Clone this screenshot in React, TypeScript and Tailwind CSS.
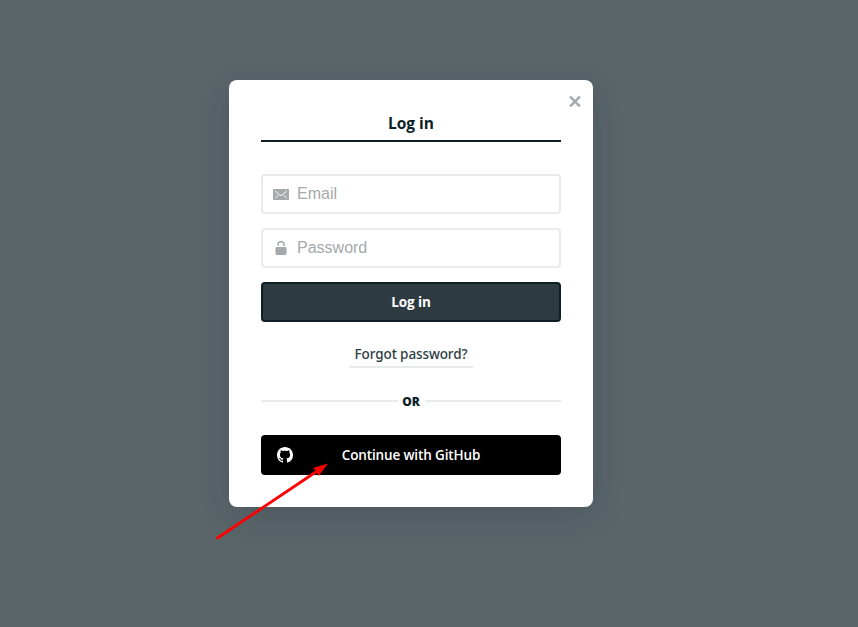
import React from "react";

function MailIcon() {
  return (
    <svg width="16" height="11" viewBox="0 0 16 11" className="block">
      <rect width="16" height="11" rx="0.8" fill="#a3a9ac" />
      <path d="M2.3 2 L6.3 5.7 Q8 7.3 9.7 5.7 L13.7 2 M2.3 9 L5 6.4 M13.7 9 L11 6.4" fill="none" stroke="#fff" strokeWidth="1" />
    </svg>
  );
}

function LockIcon() {
  return (
    <svg width="12" height="14" viewBox="0 0 12 14" className="block">
      <path d="M3 4.8 V3.6 a3 2.8 0 0 1 6 0 V5" fill="none" stroke="#a3a9ac" strokeWidth="1.6" />
      <rect x="0.5" y="6" width="11" height="8" rx="1.4" fill="#a3a9ac" />
    </svg>
  );
}

function GitHubIcon() {
  return (
    <svg width="16" height="16" viewBox="0 0 16 16" fill="#fff" className="block">
      <path d="M8 0C3.58 0 0 3.58 0 8c0 3.54 2.29 6.53 5.47 7.59.4.07.55-.17.55-.38 0-.19-.01-.82-.01-1.49-2.01.37-2.53-.49-2.69-.94-.09-.23-.48-.94-.82-1.13-.28-.15-.68-.52-.01-.53.63-.01 1.08.58 1.23.82.72 1.21 1.87.87 2.33.66.07-.52.28-.87.51-1.07-1.78-.2-3.64-.89-3.64-3.95 0-.87.31-1.59.82-2.15-.08-.2-.36-1.02.08-2.12 0 0 .67-.21 2.2.82.64-.18 1.32-.27 2-.27s1.36.09 2 .27c1.53-1.04 2.2-.82 2.2-.82.44 1.1.16 1.92.08 2.12.51.56.82 1.27.82 2.15 0 3.07-1.87 3.75-3.65 3.95.29.25.54.73.54 1.48 0 1.07-.01 1.93-.01 2.2 0 .21.15.46.55.38A8.01 8.01 0 0 0 16 8c0-4.42-3.58-8-8-8z" />
    </svg>
  );
}

function Field({ icon, label, type }: { icon: React.ReactNode; label: string; type: string }) {
  return (
    <label className="mb-3.5 flex h-10 items-center rounded border-2 border-[#e9ebeb] bg-white pl-2.5">
      <span className="flex w-4 justify-center">{icon}</span>
      <input
        type={type}
        placeholder={label}
        className="ml-2 h-9 min-w-0 flex-1 bg-transparent font-['Liberation_Sans',Arial,sans-serif] text-base text-[#0e1e25] outline-none placeholder:text-[#a3a9ac]"
      />
    </label>
  );
}

export default function App() {
  return (
    <main className="relative h-[627px] w-full overflow-hidden bg-[#5a656a] pt-20 pl-[229px] font-['Open_Sans','Noto_Sans',sans-serif]">
      <section className="relative h-[427px] w-[364px] rounded-lg bg-white px-8 pt-6 shadow-[0_8px_32px_rgba(14,30,37,0.16)]">
        <button aria-label="Close" className="absolute top-4 right-3">
          <svg width="12" height="12" viewBox="0 0 12 12" className="block">
            <path d="M1.1 0.6 L10.9 10.4 M10.9 0.6 L1.1 10.4" stroke="#a3a9ac" strokeWidth="2.4" />
          </svg>
        </button>
        <h1 className="mb-8 h-[38px] border-b-2 border-[#0e1e25] text-center text-[15.5px] leading-[38px] font-bold text-[#0e1e25]">
          Log in
        </h1>
        <Field icon={<MailIcon />} label="Email" type="email" />
        <Field icon={<LockIcon />} label="Password" type="password" />
        <button className="block h-10 w-full rounded border-2 border-[#0e1e25] bg-[#2d3b41] text-center text-[13.5px] leading-9 font-bold tracking-[-0.1px] text-white">
          Log in
        </button>
        <div className="mt-[22px] flex justify-center">
          <button className="flex h-6 w-[124px] justify-center border-b-2 border-[#e9ebeb] font-['Noto_Sans','Open_Sans',sans-serif] text-[13.5px] leading-5 font-medium tracking-[-0.1px] whitespace-nowrap text-[#2d3b41]">
            Forgot password?
          </button>
        </div>
        <div className="mt-[23px] flex h-5 items-center">
          <span className="h-0.5 flex-1 bg-[#e9ebeb]" />
          <span className="w-[27px] pt-0.5 text-center text-xs leading-5 font-extrabold text-[#0e1e25]">OR</span>
          <span className="h-0.5 flex-1 bg-[#e9ebeb]" />
        </div>
        <button className="mt-6 grid h-10 w-full grid-cols-[32px_1fr_32px] items-center rounded bg-black pr-4 pl-4 text-[13.5px] font-semibold tracking-[-0.13px] text-white">
          <GitHubIcon />
          <span className="text-center whitespace-nowrap">Continue with GitHub</span>
        </button>
      </section>
      <svg width="116" height="80" viewBox="0 0 116 80" className="pointer-events-none absolute top-[461px] left-[214px]">
        <path d="M3.5 77 L104 9.5" stroke="#f00" strokeWidth="2.8" strokeLinecap="round" />
        <path d="M114 2.5 L99 7 L102.5 10.5 L104.5 15 Z" fill="#f00" />
      </svg>
    </main>
  );
}
